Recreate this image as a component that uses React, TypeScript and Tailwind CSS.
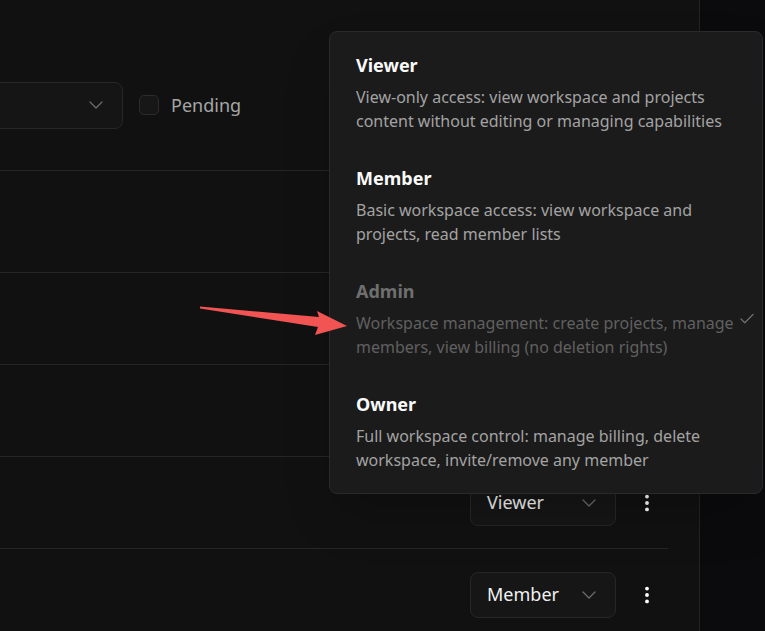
import { Check, ChevronDown, EllipsisVertical } from 'lucide-react'

const roles = [
  {
    name: 'Viewer',
    description: 'View-only access: view workspace and projects content without editing or managing capabilities',
  },
  {
    name: 'Member',
    description: 'Basic workspace access: view workspace and projects, read member lists',
  },
  {
    name: 'Admin',
    description: 'Workspace management: create projects, manage members, view billing (no deletion rights)',
    selected: true,
  },
  {
    name: 'Owner',
    description: 'Full workspace control: manage billing, delete workspace, invite/remove any member',
  },
]

const members = [
  { role: 'Admin', height: 'h-[102px]' },
  { role: 'Member', height: 'h-[92px]' },
  { role: 'Admin', height: 'h-[92px]' },
  { role: 'Viewer', height: 'h-[92px]' },
  { role: 'Member', height: 'h-[92px]' },
]

function RoleSelect({ value }: { value: string }) {
  return (
    <div className="w-[146px] h-[46px] flex items-center justify-between pl-4 pr-3.5 rounded-lg border border-[#272727] bg-[#161616]">
      <span className="text-[18px] text-[#f2f2f2]">{value}</span>
      <ChevronDown size={24} strokeWidth={1.3} className="text-[#6c6c6c]" />
    </div>
  )
}

export default function App() {
  return (
    <div
      className="relative w-[765px] h-[631px] overflow-hidden flex bg-[#0b0b0d]"
      style={{ fontFamily: '"Noto Sans", "Open Sans", sans-serif' }}
    >
      {/* MEMBERS PANEL */}
      <div className="w-[700px] shrink-0 bg-[#111111] border-r border-[#232323]">
        <div className="h-[170px] flex items-center gap-4 pt-[40px]">
          <div className="w-[140px] -ml-[17px] h-[47px] flex items-center justify-end pr-[14px] rounded-lg border border-[#272727] bg-[#151515]">
            <ChevronDown size={24} strokeWidth={1.3} className="text-[#6c6c6c]" />
          </div>
          <div className="flex items-center gap-3">
            <div className="w-5 h-5 rounded-[5px] border border-[#2c2c2c] bg-[#171717]"></div>
            <span className="text-[18px] text-[#a6a6a6]">Pending</span>
          </div>
        </div>

        <div className="w-[668px]">
          {members.map((m, i) => (
            <div
              key={i}
              className={`${m.height} border-t border-[#262626] flex items-center justify-end gap-5 pr-[10px]`}
            >
              <RoleSelect value={m.role} />
              <EllipsisVertical size={22} strokeWidth={2.2} className="text-white" />
            </div>
          ))}
        </div>
      </div>

      {/* ROLE DROPDOWN */}
      <div className="absolute left-[329px] top-[31px] w-[434px] rounded-lg border border-[#2a2a2a] bg-[#1b1b1b] px-1.5 pt-[5px] pb-1 shadow-2xl">
        {roles.map((role) => (
          <div key={role.name} className="relative px-5 py-4 h-[113px]">
            <div
              className={`text-[18px] leading-6 font-bold ${role.selected ? 'text-[#6f6f6f]' : 'text-[#fafafa]'}`}
            >
              {role.name}
            </div>
            <p
              className={`mt-2 w-[382px] text-[16px] leading-6 ${role.selected ? 'text-[#606060]' : 'text-[#a3a3a3]'}`}
            >
              {role.description}
            </p>
            {role.selected && (
              <Check size={18} strokeWidth={1.6} className="absolute right-0 top-[47px] text-[#707070]" />
            )}
          </div>
        ))}
      </div>

      {/* annotation arrow */}
      <svg className="absolute left-0 top-0 pointer-events-none" width="765" height="631">
        <polygon
          points="200,306.5 319,317 317,311 347,326 315,335 318,327 200,308.5"
          fill="#f25454"
        />
      </svg>
    </div>
  )
}
